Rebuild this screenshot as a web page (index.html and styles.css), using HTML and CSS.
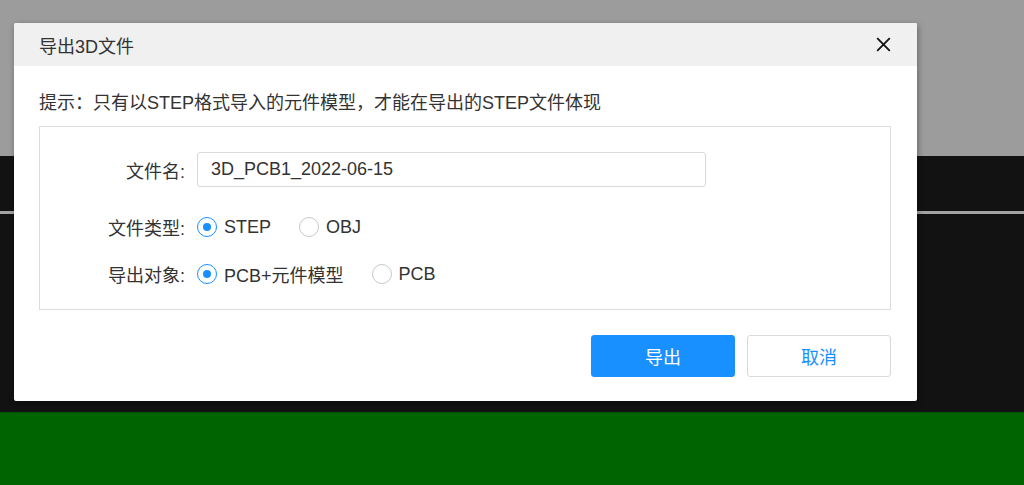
FILE: index.html
```html
<!DOCTYPE html>
<html lang="zh-CN">
<head>
    <meta charset="UTF-8">
    <title>导出3D文件</title>
    <link rel="stylesheet" href="styles.css">
</head>
<body>

    <div class="backdrop">
        <div class="band-gray"></div>
        <div class="band-dark">
            <div class="rule"></div>
        </div>
        <div class="band-green"></div>
    </div>

    <div class="dialog">
        <div class="dialog-header">
            <span class="dialog-title">导出3D文件</span>
            <svg class="close-icon" width="15" height="15" viewBox="0 0 15 15">
                <path d="M1.2 1.2 L13.8 13.8 M13.8 1.2 L1.2 13.8" stroke="#111" stroke-width="1.8" fill="none"/>
            </svg>
        </div>

        <div class="dialog-body">
            <p class="hint">提示：只有以STEP格式导入的元件模型，才能在导出的STEP文件体现</p>

            <div class="form-box">
                <div class="form-row row-name">
                    <label class="form-label">文件名:</label>
                    <input class="text-input" type="text" value="3D_PCB1_2022-06-15">
                </div>
                <div class="form-row">
                    <span class="form-label">文件类型:</span>
                    <span class="radio checked"></span><span class="radio-text">STEP</span>
                    <span class="radio"></span><span class="radio-text">OBJ</span>
                </div>
                <div class="form-row">
                    <span class="form-label">导出对象:</span>
                    <span class="radio checked"></span><span class="radio-text">PCB+元件模型</span>
                    <span class="radio"></span><span class="radio-text">PCB</span>
                </div>
            </div>
        </div>

        <div class="dialog-footer">
            <button class="btn btn-primary">导出</button>
            <button class="btn btn-default">取消</button>
        </div>
    </div>

</body>
</html>
```

FILE: styles.css
```css
/* General Styles */
body {
    margin: 0;
    padding: 0;
    font-family: "Liberation Sans", "Noto Sans CJK SC", sans-serif;
    color: #333;
    overflow: hidden;
}

/* Background of the editor behind the dialog */
.backdrop {
    display: flex;
    flex-direction: column;
    height: 485px;
}

.band-gray {
    height: 156px;
    background-color: #9c9c9c;
}

.band-dark {
    height: 256px;
    background-color: #121212;
    padding-top: 55px;
    box-sizing: border-box;
}

.rule {
    height: 3px;
    background-color: #a3a3a3;
}

.band-green {
    flex: 1;
    background-color: #006400;
    border-top: 1px solid #005200;
}

/* Dialog */
.dialog {
    position: absolute;
    left: 14px;
    top: 23px;
    width: 903px;
    background-color: #ffffff;
    border-radius: 2px;
    box-shadow: 1px 2px 6px rgba(0, 0, 0, 0.35);
}

.dialog-header {
    height: 43px;
    background-color: #f0f0f0;
    display: flex;
    align-items: center;
    justify-content: space-between;
    padding: 0 26px 0 25px;
    border-radius: 2px 2px 0 0;
}

.dialog-title {
    font-size: 18px;
    color: #333;
}

.close-icon {
    display: block;
}

.dialog-body {
    padding: 25px 26px 0 25px;
}

.hint {
    margin: 0 0 11px 0;
    font-size: 18px;
    line-height: 24px;
    color: #333;
}

/* Form box */
.form-box {
    border: 1px solid #dcdcdc;
    padding: 25px 0 17px 0;
    display: flex;
    flex-direction: column;
    gap: 11px;
}

.form-row {
    display: flex;
    align-items: center;
    height: 36px;
}

.form-row.row-name {
    height: 35px;
    margin-bottom: 11px;
}

.form-label {
    width: 145px;
    margin-right: 12px;
    text-align: right;
    font-size: 18px;
    color: #333;
}

.text-input {
    width: 509px;
    height: 35px;
    box-sizing: border-box;
    border: 1px solid #d9d9d9;
    border-radius: 3px;
    padding: 0 13px;
    font-family: "Liberation Sans", "Noto Sans CJK SC", sans-serif;
    font-size: 18px;
    color: #333;
    outline: none;
}

.radio {
    width: 20px;
    height: 20px;
    box-sizing: border-box;
    border: 1px solid #c8c8c8;
    border-radius: 50%;
    margin-right: 7px;
    display: flex;
    align-items: center;
    justify-content: center;
}

.radio.checked {
    border-color: #1890ff;
}

.radio.checked::after {
    content: "";
    width: 8px;
    height: 8px;
    border-radius: 50%;
    background-color: #1890ff;
}

.radio-text {
    font-size: 18px;
    color: #333;
    margin-right: 28px;
}

/* Footer buttons */
.dialog-footer {
    display: flex;
    justify-content: flex-end;
    gap: 12px;
    padding: 25px 26px 24px 0;
}

.btn {
    width: 144px;
    height: 42px;
    border-radius: 3px;
    font-family: "Noto Sans CJK SC", sans-serif;
    font-size: 18px;
    cursor: pointer;
}

.btn-primary {
    background-color: #1890ff;
    border: 1px solid #1890ff;
    color: #ffffff;
}

.btn-default {
    background-color: #ffffff;
    border: 1px solid #d9d9d9;
    color: #1890ff;
}
```
